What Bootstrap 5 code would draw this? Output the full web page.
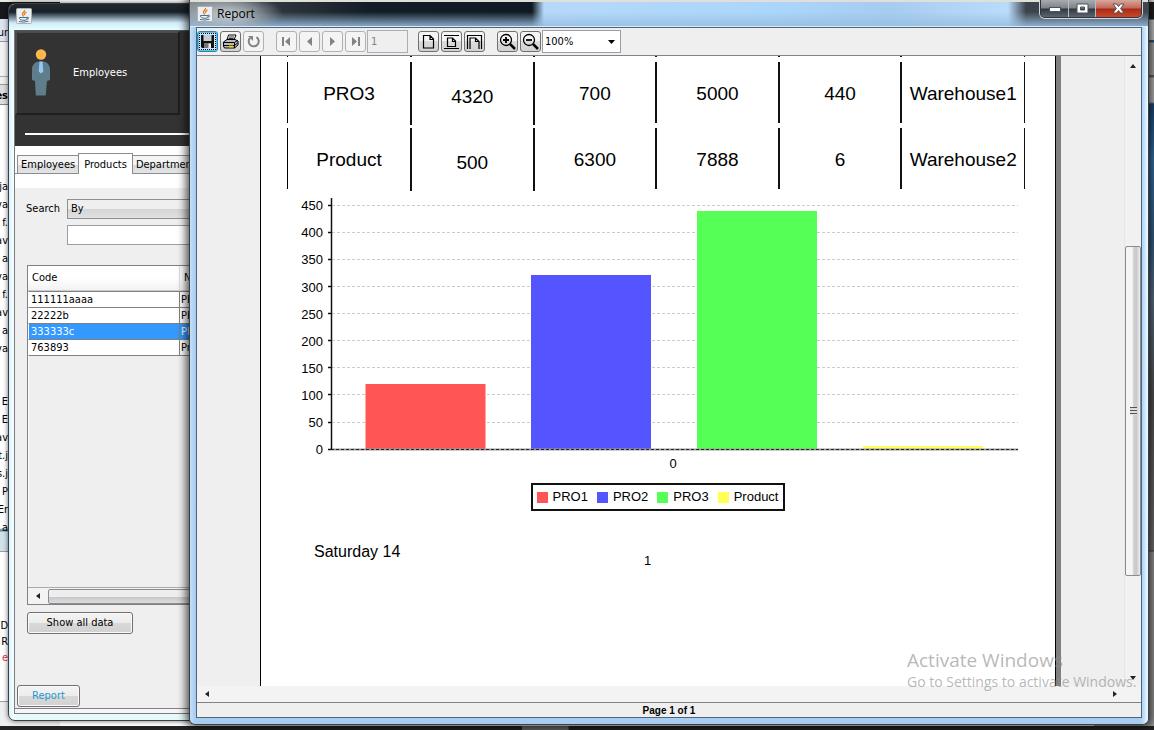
<!DOCTYPE html>
<html lang="en">
<head>
<meta charset="utf-8">
<meta name="viewport" content="width=device-width, initial-scale=1">
<title>Report</title>
<link href="https://cdn.jsdelivr.net/npm/bootstrap@5.3.0/dist/css/bootstrap.min.css" rel="stylesheet">
<script src="https://cdn.jsdelivr.net/npm/bootstrap@5.3.0/dist/js/bootstrap.bundle.min.js"></script>
<style>
:root { --ui: "DejaVu Sans Condensed", "DejaVu Sans", sans-serif; --doc: "Liberation Sans", Arial, sans-serif; --face: #efefef; }
body { font: 11px/16px var(--ui); color: #000; background: #fff; }
button, input, select { font: inherit; color: inherit; }
.desktop { height: 100vh; min-height: 700px; }

/* editor behind the windows */
.editor { inset: 0; }
.editor-side { width: 60px; background: linear-gradient(#e8e8e0 0 2px, #15181c 2px 19px, #dfe3f0 19px 41px, #999 41px 42px, #f2f2f2 42px 76px, #aaa 76px 77px, #efefef 77px 84px, #999 84px 85px, #ddd 85px 104px, #888 104px 105px, #fff 105px 528px, #5a8aa5 530px 531px, #cfe2ea 532px 551px, #99a 551px 552px, #fff 552px 701px, #99a 701px 702px, #efefef 702px); }
.code { width: 8px; padding-top: 24px; font: 11px/18px var(--ui); }
.code div { height: 18px; display: flex; justify-content: flex-end; white-space: pre; }
.code .gap-a { height: 45px; } .code .gap-b { height: 73px; } .code .gap-c { height: 35px; } .code .gap-d { height: 80px; }
.code .short { height: 16px; }
.editor-right { width: 60px; background: linear-gradient(#e8e8e0 0 2px, #222 2px 19px, #ccc 20px 40px, #2a5f8c 40px 42px, #aaa 43px 75px, #666 75px 77px, #bbb 78px 102px, #1c4a78 104px, #3a76ac 160px, #3a6288 240px, #5d7488 300px, #555 400px, #777 550px, #444 551px, #999 552px); }
.taskbar { height: 4px; background: linear-gradient(90deg, #222 0 522px, #666 522px 568px, #222 569px); }

/* window frames */
.win { border: 1px solid #3a3f47; border-radius: 7px; }
.win-main { left: 8px; top: 3px; bottom: 9px; width: 420px; padding: 0 6px 6px; background: linear-gradient(90deg, #d8f0fb 0, #f4ffff 4px, #e6fafa 8px); box-shadow: 0 0 5px #0009; }
.win-main .title { height: 26px; padding: 4px 0 0 7px; margin: 0 -6px; border-radius: 6px 6px 0 0; background: linear-gradient(#24282b 0, #17222b 8px, #d2ebfa 19px, #e5ffff 100%); }
.win-report { left: 189px; right: 5px; top: 0; bottom: 5px; padding: 0 6px 6px; background: linear-gradient(90deg, #c5e0f8 0, #a8cdf0 5px, #a8cdf0 calc(100% - 7px), #bcdfff calc(100% - 4px), #eaf6ff calc(100% - 1px)); box-shadow: 0 0 9px 3px #000a; border-radius: 0 0 6px 6px; border-top: 0; }
.win-report .title { height: 27px; margin: 0 -6px; padding-left: 7px; border-top: 2px solid #e0dfd8; border-bottom: 1px solid #d8ecff;
  background: radial-gradient(ellipse 55px 20px at 38px 12px, #d5dce2e0, #aab4bc90 60%, transparent), linear-gradient(transparent 0, transparent 10px, #98bee0cc 23px), linear-gradient(90deg, #80868a 0, #343b41 70px, #131d26 180px, #101a22 342px, #b5d9fb 354px, #abd6fb 580px, #a6ccf0 700px, #b9dcfb calc(100% - 140px), #3c444b calc(100% - 122px), #40474e 100%); }
.win-title { font: 12px/20px "Open Sans", "Noto Sans", sans-serif; }
.java { width: 16px; height: 16px; flex: none; }
.caption-btns { top: 0; right: 6px; height: 18px; border: 1px solid #2e363d; border-top: 0; border-radius: 0 0 5px 5px; box-shadow: 0 0 0 1px #cfd6dc; overflow: hidden; }
.caption-btns button { border: 0; padding: 0; width: 27px; height: 17px; background: linear-gradient(#a7acb0 0, #7b8287 8px, #30383f 9px, #5c6670 100%); display: flex; align-items: center; justify-content: center; }
.caption-btns button + button { border-left: 1px solid #b6bcc1; }
.caption-btns .shut { width: 46px; background: linear-gradient(#d8a79d 0, #c0685a 8px, #ab2a13 9px, #c8472c 100%); }

/* employees window */
.inner { border: 1px solid #7b7b84; border-top-color: #555; background: var(--face); margin-left: -1px; }
.hero { height: 115px; background: #333; padding: 0; }
.hero-btn { width: 165px; height: 84px; background: #333; color: #fff; border: 2px solid; border-color: #4b4b4b #1f1f1f #1f1f1f #4b4b4b; padding: 0 0 0 14px; }
.hero-btn svg { width: 20px; height: 48px; margin-right: 22px; }
.hero-rule { height: 2px; background: #fff; margin: 18px 0 0 10px; }
.tabs { height: 28px; background: #fff; padding: 7px 0 0 2px; border-bottom: 1px solid #8b8b94; }
.tabs button { height: 19px; line-height: 17px; margin-top: 2px; padding: 0 3px; border: 1px solid #8b8b94; background: linear-gradient(#f4f4f4 50%, #d9d9d9 50%, #e4e4e4); margin-left: -1px; }
.tabs button:first-child { margin-left: 0; }
.tabs button.on { height: 22px; margin: 0 0 0 -1px; background: #fff; border-bottom: 0; padding: 0 5px; }
.pane-top { height: 14px; background: #fff; }
.fields { display: grid; grid-template-columns: 41px 1fr; row-gap: 6px; margin: 11px 0 20px 11px; align-items: center; }
.combo { appearance: none; height: 20px; border: 1px solid #8e8f97; border-radius: 0; background: linear-gradient(#efefef 50%, #d4d4d4 50%, #e2e2e2); padding: 0 3px; width: 100%; }
.textbox { height: 20px; border: 1px solid #9c9ca6; background: #fff; padding: 0 3px; border-radius: 0; width: 100%; }
.fields .textbox { grid-column: 2; }
.grid-pane { margin-left: 12px; border: 1px solid #80808a; border-right: 0; height: 340px; box-shadow: inset 1px 0 #fff; }
.data { border-collapse: separate; border-spacing: 0; width: 100%; table-layout: fixed; }
.data th { font-weight: 400; height: 25px; padding: 0 4px; background: linear-gradient(#fff 50%, #f2f2f4); border-right: 1px solid #ddd; border-bottom: 1px solid #ccc; }
.data th:first-child { width: 152px; }
.data td { height: 16px; line-height: 15px; padding: 0 1px; background: #fff; border-bottom: 1px solid #808080; border-right: 1px solid #808080; }
.data td:first-child { border-left: 1px solid #fff; padding-left: 2px; }
.data tbody tr:first-child td { border-top: 1px solid #808080; height: 17px; }
.data .picked td { background: #3399ff; color: #fff; }
.hbar { height: 17px; background: #f3f3f3; flex: none; }
.grid-pane .hbar { border-top: 1px solid #aaa; }
.hthumb { height: 15px; border: 1px solid #8c8c90; border-radius: 2px; background: linear-gradient(#eee 50%, #c8c8ca 55%, #dcdcdc); margin-left: 8px; }
.java-btn { height: 22px; padding: 0; border: 1px solid #707070; border-radius: 3px; background: linear-gradient(#f4f4f4 0, #ececec 50%, #d8d8d8 50%, #d2d2d2); line-height: 18px; box-shadow: inset 0 0 0 1px #fafafa; }
.show-all { width: 106px; margin: 7px 0 0 12px; }
.report-btn { width: 63px; color: #1a9ad0; margin: 0 0 1px 2px; }
.foot-rule { height: 5px; border-top: 1px solid #80808a; background: #f6f6f6; }

/* report viewer */
.viewer { border: 1px solid #4e6478; background: var(--face); }
.tools { height: 28px; border-bottom: 1px solid #82828c; }
.tool-set { padding-left: 10px; }
.tool { width: 21px; height: 21px; padding: 0; border: 1px solid #707070; border-radius: 3px; background: linear-gradient(#f4f4f4 50%, #dcdcdc 50%, #d2d2d2); display: flex; align-items: center; justify-content: center; flex: none; margin-right: 2px; }
.tool svg { width: 17px; height: 17px; }
.tool.hot { border-color: #2c84ae; outline: 1px dotted #000; outline-offset: -3px; background: #c4e8f8; box-shadow: inset 0 0 0 1px #5bc2ea; }
.tool:disabled { border-color: #adb2b5; background: #f4f4f4; color: #838383; }
.page-no { width: 41px; height: 23px; border: 1px solid #adadb6; background: var(--face); color: #838383; padding: 0 3px; margin-left: -1px; }
.zoomer { width: 79px; height: 23px; appearance: none; border: 1px solid #9c9ca6; border-radius: 0; padding: 0 2px; margin-left: -1px; background: #fff url("data:image/svg+xml,%3Csvg xmlns='http://www.w3.org/2000/svg' width='7' height='4'%3E%3Cpath d='M0 0h7L3.500 4z'/%3E%3C/svg%3E") no-repeat right 5px center; }
.page { width: 801px; background: #fff; border-left: 1px solid #000; border-right: 5px solid #808080; box-shadow: inset -1px 0 #000; font-family: var(--doc); overflow: hidden; }
.vbar { width: 17px; background: #f1f1f1; border-left: 1px solid #e6e6e6; padding: 8px 0 6px; flex: none; }
.vthumb { width: 16px; border: 1px solid #8c8c90; border-radius: 2px; background: linear-gradient(90deg, #f5f5f5 45%, #cfcfd3 55%, #cacace 75%, #eee); flex: 327; }
.vgap-top { flex: 178; } .vgap-bot { flex: 100; }
.grip { width: 7px; height: 8px; background: repeating-linear-gradient(#555 0 1px, #ddd 1px 3px); }
.tri { width: 0; height: 0; border: 3px solid transparent; flex: none; }
.tri-up { border-bottom: 4px solid #222; border-top: 0; } .tri-down { border-top: 4px solid #222; border-bottom: 0; }
.tri-left { border-right: 4px solid #222; border-left: 0; } .tri-right { border-left: 4px solid #222; border-right: 0; }
.stock { border-collapse: separate; border-spacing: 0 5px; width: 738px; margin: -5px 0 0 26px; table-layout: fixed; font-size: 19px; line-height: 24px; text-align: center; }
.stock td { height: 61px; padding: 2px 0 0; border-right: 2px solid #111; position: relative; }
.stock td:first-child { border-left: 1px solid #000; width: 125px; }
.stock td:last-child { border-right-width: 1px; }
.stock .stub td { height: 1px; padding: 0; }
.stock .low { padding-top: 8px; }
.stock .long::after { content: ""; position: absolute; right: -2px; bottom: -2px; width: 2px; height: 2px; background: #111; }
.chart { display: block; width: 795px; height: 285px; margin-top: 4px; }
.chart text { font: 13px var(--doc); }
.legend-row { padding-right: 2px; }
.legend-box { border: 2px solid #111; height: 28px; width: 254px; font-size: 13px; padding: 0 4px; }
.swatch { width: 11px; height: 11px; margin-right: 5px; }
.sw-red { background: #ff5555; } .sw-blue { background: #5555ff; } .sw-green { background: #55ff55; } .sw-yellow { background: #ffff55; }
.page-foot { padding: 0 53px; font-size: 16px; line-height: 24px; margin-top: 29px; display: grid; grid-template-columns: 330px 1fr; }
.page-foot .num { font-size: 13px; padding-top: 9px; }
.status { height: 15px; border-top: 1px solid #82828c; font: bold 10px/15px var(--doc); }
.viewer > .hbar { height: 16px; }
.activate { right: 14px; bottom: 38px; color: #8c8c8ca0; font-family: "Open Sans", "Noto Sans", sans-serif; pointer-events: none; width: 233px; white-space: nowrap; }
.act-big { font-size: 19px; line-height: 24px; } .act-small { font-size: 14px; line-height: 20px; }
</style>
</head>
<body>
<svg width="0" height="0" class="position-absolute" aria-hidden="true">
  <symbol id="java" viewBox="0 0 16 16">
    <rect x=".5" y=".5" width="15" height="15" rx="1" fill="#eceff1" stroke="#a9b0b6"/>
    <path d="M8.500 2c1 1.800-3 2.600-2 4.500.4.900 1 1.200 1 2M10.500 4c-2 1-2.500 1.900-1.600 3" fill="none" stroke="#ee7c1a" stroke-width="1.300"/>
    <path d="M3.500 9.500h7.500v1.200c0 1-1 1.600-3 1.600s-3.700-.5-4.500-1.600zM11 9.300c2-.6 2.500 1.600-.5 2" fill="none" stroke="#47718f"/>
    <path d="M3 13.500q5 1.300 9.500-.3" fill="none" stroke="#47718f"/>
  </symbol>
</svg>
<main class="desktop position-relative overflow-hidden">
  <div class="editor position-absolute d-flex flex-column" aria-hidden="true">
    <div class="d-flex flex-grow-1 justify-content-between overflow-hidden">
      <div class="editor-side">
        <div class="code">
          <div>ur</div><div class="gap-a"></div><div><b>es</b></div><div class="gap-b"></div>
          <div>ja</div><div>va</div><div>f.</div><div>av</div><div>a</div><div>va</div><div>f.</div><div>av</div><div>a</div><div>va</div>
          <div class="gap-c"></div>
          <div>E</div><div>E</div><div>av</div><div>t.j</div><div>s.j</div><div>P</div><div>Er</div><div>a</div>
          <div class="gap-d"></div>
          <div class="short">D</div><div class="short">R</div><div class="short text-danger">e</div>
        </div>
      </div>
      <div class="editor-right"></div>
    </div>
    <div class="taskbar"></div>
  </div>

  <section class="win win-main position-absolute d-flex flex-column" aria-label="Employees">
    <div class="title d-flex"><svg class="java"><use href="#java"/></svg></div>
    <div class="inner flex-grow-1 d-flex flex-column">
      <header class="hero">
        <button class="hero-btn d-flex align-items-center" type="button">
          <svg viewBox="0 0 20 48"><circle cx="10" cy="5.500" r="5.200" fill="#ffb74d"/><path d="M9 12.500h2c5 0 8 3.500 8 8V31l-3 1-1.300 14.500H4.800L4 32l-3-1V20.500c0-4.500 3-8 8-8z" fill="#607d8b"/><path d="M8.500 12.500h3l.8 10-2.300 2-2.300-2z" fill="#90caf9"/></svg>
          Employees</button>
        <div class="hero-rule"></div>
      </header>
      <div class="tabs d-flex align-items-start" role="tablist">
        <button type="button" role="tab">Employees</button><button type="button" role="tab" class="on" aria-selected="true">Products</button><button type="button" role="tab">Departments</button>
      </div>
      <div class="pane-top"></div>
      <div class="fields">
        <label for="by">Search</label>
        <select id="by" class="combo"><option>By</option></select>
        <input class="textbox" type="text" aria-label="Search text">
      </div>
      <div class="grid-pane d-flex flex-column">
        <table class="data">
          <thead><tr><th>Code</th><th>Name</th></tr></thead>
          <tbody>
            <tr><td>111111aaaa</td><td>PRO1</td></tr>
            <tr><td>22222b</td><td>PRO2</td></tr>
            <tr class="picked"><td>333333c</td><td>PRO3</td></tr>
            <tr><td>763893</td><td>Product</td></tr>
          </tbody>
        </table>
        <div class="hbar mt-auto d-flex align-items-center ps-1"><span class="tri tri-left ms-1"></span><span class="hthumb flex-grow-1"></span></div>
      </div>
      <div><button class="java-btn show-all" type="button">Show all data</button></div>
      <div class="mt-auto"><button class="java-btn report-btn" type="button">Report</button></div>
      <div class="foot-rule"></div>
    </div>
  </section>

  <section class="win win-report position-absolute d-flex flex-column" aria-label="Report">
    <div class="title d-flex align-items-center"><svg class="java me-1"><use href="#java"/></svg><span class="win-title">Report</span></div>
    <div class="caption-btns position-absolute d-flex">
      <button type="button" aria-label="Minimize"><svg width="12" height="6"><rect x=".5" y="1.500" width="11" height="4" fill="#fff" stroke="#4b525c"/></svg></button>
      <button type="button" aria-label="Maximize"><svg width="13" height="11"><path d="M1 1h11v9H1zM4.500 4v3h4V4z" fill="#fff" stroke="#4b525c" fill-rule="evenodd"/></svg></button>
      <button type="button" class="shut" aria-label="Close"><svg width="13" height="11"><path d="M1 1h3.500l2 2.500L8.500 1H12L8.600 5.500 12 10H8.500l-2-2.500-2 2.500H1l3.400-4.500z" fill="#fff" stroke="#4b525c"/></svg></button>
    </div>
    <div class="viewer flex-grow-1 d-flex flex-column">
      <div class="tools d-flex align-items-center" role="toolbar">
        <button class="tool hot" type="button" aria-label="Save"><svg viewBox="0 0 17 17"><path d="M2 2h13v13H3l-1-1z" fill="#111"/><path d="M4.500 2h8v6h-8z" fill="#c9cdd0"/><path d="M5 10h7v5H5z" fill="#777"/><path d="M9.500 10.500H12V15H9.500z" fill="#eee"/></svg></button>
        <button class="tool" type="button" aria-label="Print"><svg viewBox="0 0 17 17"><path d="M5 7l1.500-5H14l-2 5z" fill="#fff" stroke="#000"/><path d="M7 4h5M6.500 5.500h5" stroke="#000" stroke-width=".8"/><path d="M1.500 9L5 6.500h8L16 8v4l-3.500 3h-10l-1-2z" fill="#bbb" stroke="#000"/><path d="M2 9.500h10.500l3-2M2 12.500h10.500l3-2.500M12.500 9.500V15" fill="none" stroke="#000"/><path d="M7 12.500h4v2H7z" fill="#e8d200"/></svg></button>
        <button class="tool" type="button" disabled aria-label="Reload"><svg viewBox="0 0 17 17"><path d="M11.500 4.200A5 5 0 1 1 5 5" fill="none" stroke="currentColor" stroke-width="2"/><path d="M3 3h5v5z" fill="currentColor"/></svg></button>
        <span class="tool-set d-flex">
        <button class="tool" type="button" disabled aria-label="First page"><svg viewBox="0 0 17 17" fill="currentColor"><path d="M4 4h2v9H4zM12 4v9L7 8.500z"/></svg></button>
        <button class="tool" type="button" disabled aria-label="Previous page"><svg viewBox="0 0 17 17" fill="currentColor"><path d="M11 4v9L6 8.500z"/></svg></button>
        <button class="tool" type="button" disabled aria-label="Next page"><svg viewBox="0 0 17 17" fill="currentColor"><path d="M6 4v9l5-4.500z"/></svg></button>
        <button class="tool" type="button" disabled aria-label="Last page"><svg viewBox="0 0 17 17" fill="currentColor"><path d="M11 4h2v9h-2zM5 4v9l5-4.500z"/></svg></button>
        </span>
        <input class="page-no" type="text" value="1" disabled aria-label="Page">
        <span class="tool-set d-flex">
        <button class="tool" type="button" aria-label="Actual size"><svg viewBox="0 0 17 17" fill="none" stroke="#000" stroke-width="1.200"><path d="M3.500 2.500h6.500l3.500 3.500v9h-10zM10 2.500v4h3.500"/></svg></button>
        <button class="tool" type="button" aria-label="Fit page"><svg viewBox="0 0 17 17" fill="none" stroke="#000" stroke-width="1.200"><path d="M1 2.500h15M1 15.500h15M4.500 5h5l3 3v5.500h-8zM9.500 5v3.500h3"/></svg></button>
        <button class="tool" type="button" aria-label="Fit width"><svg viewBox="0 0 17 17" fill="none" stroke="#000" stroke-width="1.200"><path d="M1.500 16V2.500h14V16M4 16V5h5.500l3.500 3.500V16M9.500 5v3.500H13"/></svg></button>
        </span>
        <span class="tool-set d-flex">
        <button class="tool" type="button" aria-label="Zoom in"><svg viewBox="0 0 17 17" fill="none" stroke="#000"><circle cx="7" cy="7" r="5.500" stroke-width="1.300"/><path d="M4 7h6M7 4v6" stroke-width="1.800"/><path d="M11 11l5 5" stroke-width="2.500"/></svg></button>
        <button class="tool" type="button" aria-label="Zoom out"><svg viewBox="0 0 17 17" fill="none" stroke="#000"><circle cx="7" cy="7" r="5.500" stroke-width="1.300"/><path d="M4 7h6" stroke-width="1.800"/><path d="M11 11l5 5" stroke-width="2.500"/></svg></button>
        </span>
        <select class="zoomer" aria-label="Zoom"><option>100%</option></select>
      </div>
      <div class="d-flex flex-grow-1 overflow-hidden">
        <div class="d-flex justify-content-center flex-grow-1">
          <article class="page">
            <table class="stock">
              <tbody>
              <tr class="stub"><td></td><td></td><td></td><td></td><td></td><td></td></tr>
              <tr><td class="long">PRO3</td><td class="long low">4320</td><td>700</td><td>5000</td><td>440</td><td>Warehouse1</td></tr>
              <tr><td class="long">Product</td><td class="long low">500</td><td>6300</td><td>7888</td><td>6</td><td>Warehouse2</td></tr>
              </tbody>
            </table>
            <svg class="chart" viewBox="261 198 795 285" role="img" aria-label="Quantity by product">
              <path d="M332 205.500h686M332 232.500h686M332 259.500h686M332 286.500h686M332 313.500h686M332 340.500h686M332 367.500h686M332 394.500h686M332 422.500h686" stroke="#ccc" stroke-dasharray="3 2"/>
              <path d="M365.500 384h120v65h-120z" fill="#f55"/><path d="M531 275h120v174H531z" fill="#55f"/><path d="M697 211h120v238H697z" fill="#5f5"/><path d="M863 446h120v3H863z" fill="#ff5"/>
              <path d="M331 449.500h687" stroke="#999" stroke-width="2"/><path d="M331 449.500h687" stroke="#222" stroke-dasharray="3 2"/>
              <path d="M331.500 198v252M328 205.500h3M328 232.500h3M328 259.500h3M328 286.500h3M328 313.500h3M328 340.500h3M328 367.500h3M328 394.500h3M328 422.500h3M328 449.500h3" stroke="#111" stroke-width="1.500"/>
              <g text-anchor="end"><text x="323" y="210">450</text><text x="323" y="237">400</text><text x="323" y="264">350</text><text x="323" y="292">300</text><text x="323" y="319">250</text><text x="323" y="346">200</text><text x="323" y="373">150</text><text x="323" y="400">100</text><text x="323" y="427">50</text><text x="323" y="454">0</text></g>
              <text x="673" y="468" text-anchor="middle">0</text>
            </svg>
            <div class="legend-row d-flex justify-content-center">
            <div class="legend-box d-flex align-items-center justify-content-between">
              <span class="d-flex align-items-center"><i class="swatch sw-red"></i>PRO1</span>
              <span class="d-flex align-items-center"><i class="swatch sw-blue"></i>PRO2</span>
              <span class="d-flex align-items-center"><i class="swatch sw-green"></i>PRO3</span>
              <span class="d-flex align-items-center"><i class="swatch sw-yellow"></i>Product</span>
            </div>
            </div>
            <div class="page-foot"><span>Saturday 14</span><span class="num">1</span></div>
          </article>
        </div>
        <div class="vbar d-flex flex-column align-items-center">
          <span class="tri tri-up"></span><span class="vgap-top"></span>
          <span class="vthumb d-flex align-items-center justify-content-center"><i class="grip"></i></span>
          <span class="vgap-bot"></span><span class="tri tri-down"></span>
        </div>
      </div>
      <div class="hbar d-flex align-items-center justify-content-between ps-2 pe-4"><span class="tri tri-left"></span><span class="tri tri-right"></span></div>
      <div class="status text-center">Page 1 of 1</div>
    </div>
  </section>

  <div class="activate position-absolute"><div class="act-big">Activate Windows</div><div class="act-small">Go to Settings to activate Windows.</div></div>
</main>
</body>
</html>
